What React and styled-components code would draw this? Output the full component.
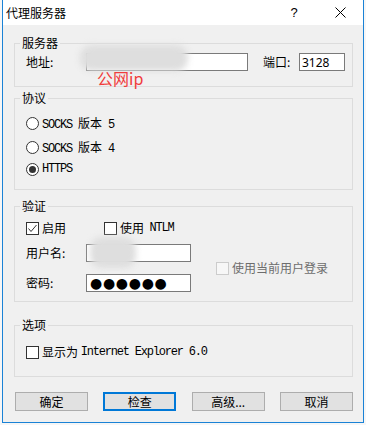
import React from "react";
import styled, { createGlobalStyle } from "styled-components";

const GlobalStyle = createGlobalStyle`
  html, body {
    margin: 0;
    padding: 0;
    background: #f6f6f6;
  }
  body {
    font-family: "Noto Sans CJK SC", "Noto Sans", sans-serif;
    font-size: 12px;
    color: #000;
  }
`;

const Dialog = styled.div`
  position: relative;
  box-sizing: border-box;
  width: 362px;
  height: 423px;
  margin-left: 2px;
  background: #f0f0f0;
  border: 1px solid #1a82d6;
  border-top: none;
  display: flex;
  flex-direction: column;
  overflow: hidden;
`;

const TitleBar = styled.div`
  height: 25px;
  flex: none;
  background: #fff;
  display: flex;
  align-items: center;
  padding-left: 3px;
  font-size: 12px;
`;

const Title = styled.span`
  line-height: 14px;
`;

const CaptionButton = styled.div`
  width: 46px;
  height: 25px;
  display: flex;
  align-items: center;
  justify-content: center;
  font-family: "Liberation Sans", sans-serif;
  font-size: 13px;
  margin-left: ${(p) => (p.$first ? "auto" : "0")};
`;

const Content = styled.div`
  display: flex;
  flex-direction: column;
  padding: 0 10px 0 11px;
`;

const Group = styled.div`
  box-sizing: border-box;
  border: 1px solid #dcdcdc;
  margin-top: ${(p) => p.$mt}px;
  height: ${(p) => p.$h}px;
  padding: 0 11px;
`;

const Legend = styled.div`
  width: fit-content;
  height: 14px;
  margin: -8px 0 0 -6px;
  padding: 0 2px;
  background: #f0f0f0;
  line-height: 14px;
  font-size: 12px;
`;

const Row = styled.div`
  display: flex;
  align-items: center;
  margin-top: ${(p) => p.$mt || 0}px;
  height: ${(p) => p.$h || 14}px;
`;

const FieldLabel = styled.span`
  width: ${(p) => p.$w || 60}px;
  flex: none;
  line-height: 14px;
  margin-left: ${(p) => p.$ml || 0}px;
`;

const TextBox = styled.div`
  box-sizing: border-box;
  width: ${(p) => p.$w}px;
  height: 18px;
  flex: none;
  background: #fff;
  border: 1px solid #7a7a7a;
  display: flex;
  align-items: center;
  padding: 0 2px;
  font-family: "Noto Sans", sans-serif;
  font-size: 12px;
`;

const Dots = styled.span`
  font-family: "DejaVu Sans", sans-serif;
  font-size: 14px;
  line-height: 14px;
  letter-spacing: 0.7px;
  margin-left: 1px;
`;

const Mono = styled.span`
  font-family: "Liberation Mono", "Noto Sans CJK SC", monospace;
  font-size: 12px;
  letter-spacing: -1.2px;
  line-height: 14px;
  height: 14px;
  white-space: nowrap;
`;

const Han = styled.span`
  font-family: "Noto Sans CJK SC", sans-serif;
  letter-spacing: 0;
`;

const Choice = styled.label`
  display: flex;
  align-items: center;
  height: 14px;
  width: ${(p) => (p.$w ? `${p.$w}px` : "auto")};
  margin-left: ${(p) => p.$ml || 0}px;
  color: ${(p) => (p.$disabled ? "#6d6d6d" : "#000")};
  line-height: 14px;
  white-space: nowrap;
`;

const Box = styled.span`
  box-sizing: border-box;
  width: 13px;
  height: 13px;
  flex: none;
  margin-right: 3px;
  background: ${(p) => (p.$disabled ? "#f7f7f7" : "#fff")};
  border: 1px solid ${(p) => (p.$disabled ? "#cccccc" : "#333")};
  display: flex;
  align-items: center;
  justify-content: center;
`;

const Radio = styled.span`
  box-sizing: border-box;
  width: 13px;
  height: 13px;
  flex: none;
  margin-right: 3px;
  border-radius: 50%;
  background: #fff;
  border: 1px solid #333;
  display: flex;
  align-items: center;
  justify-content: center;

  &::after {
    content: "";
    display: ${(p) => (p.$on ? "block" : "none")};
    width: 7px;
    height: 7px;
    border-radius: 50%;
    background: #333;
  }
`;

const Split = styled.div`
  display: flex;
  align-items: center;
  margin-top: 9px;
`;

const Column = styled.div`
  display: flex;
  flex-direction: column;
`;

const Buttons = styled.div`
  display: flex;
  justify-content: space-between;
  margin: 15px 0 0 1px;
`;

const Button = styled.div`
  box-sizing: border-box;
  width: 73px;
  height: 19px;
  display: flex;
  align-items: center;
  justify-content: center;
  background: #e1e1e1;
  border: ${(p) => (p.$focus ? "2px solid #0078d7" : "1px solid #adadad")};
  font-size: 12px;
`;

const Smudge = styled.div`
  position: absolute;
  left: ${(p) => p.$x}px;
  top: ${(p) => p.$y}px;
  width: ${(p) => p.$w}px;
  height: ${(p) => p.$h}px;
  background: #dedede;
  border-radius: 12px;
  filter: blur(3px);
`;

const Note = styled.div`
  position: absolute;
  left: 94px;
  top: 70px;
  color: #f03c3c;
  font-family: "Noto Sans CJK SC", "Noto Sans", sans-serif;
  font-size: 16px;
  line-height: 16px;
`;

const Check = () => (
  <svg width="11" height="11" viewBox="0 0 11 11">
    <polyline points="1.5,5.5 4,8.5 9.5,2" fill="none" stroke="#333" strokeWidth="1" />
  </svg>
);

const CloseIcon = () => (
  <svg width="11" height="11" viewBox="0 0 11 11">
    <path d="M0.5 0.5 L10.5 10.5 M10.5 0.5 L0.5 10.5" stroke="#000" strokeWidth="1" />
  </svg>
);

export default function App() {
  return (
    <>
      <GlobalStyle />
      <Dialog>
        <TitleBar>
          <Title>代理服务器</Title>
          <CaptionButton $first>?</CaptionButton>
          <CaptionButton>
            <CloseIcon />
          </CaptionButton>
        </TitleBar>

        <Content>
          <Group $mt={18} $h={44}>
            <Legend>服务器</Legend>
            <Row $mt={3} $h={18}>
              <FieldLabel>地址:</FieldLabel>
              <TextBox $w={162} />
              <FieldLabel $w={36} $ml={15}>端口:</FieldLabel>
              <TextBox $w={46}>3128</TextBox>
            </Row>
          </Group>

          <Group $mt={11} $h={92}>
            <Legend>协议</Legend>
            <Row $mt={11}>
              <Choice>
                <Radio />
                <Mono>SOCKS <Han>版本</Han> 5</Mono>
              </Choice>
            </Row>
            <Row $mt={10}>
              <Choice>
                <Radio />
                <Mono>SOCKS <Han>版本</Han> 4</Mono>
              </Choice>
            </Row>
            <Row $mt={8}>
              <Choice>
                <Radio $on />
                <Mono>HTTPS</Mono>
              </Choice>
            </Row>
          </Group>

          <Group $mt={16} $h={96}>
            <Legend>验证</Legend>
            <Row $mt={8}>
              <Choice $w={78}>
                <Box>
                  <Check />
                </Box>
                启用
              </Choice>
              <Choice>
                <Box />
                使用&nbsp;&nbsp;<Mono>NTLM</Mono>
              </Choice>
            </Row>
            <Split>
              <Column>
                <Row $h={18}>
                  <FieldLabel>用户名:</FieldLabel>
                  <TextBox $w={105} />
                </Row>
                <Row $mt={12} $h={18}>
                  <FieldLabel>密码:</FieldLabel>
                  <TextBox $w={105}>
                    <Dots>●●●●●●</Dots>
                  </TextBox>
                </Row>
              </Column>
              <Choice $disabled $ml={25}>
                <Box $disabled />
                使用当前用户登录
              </Choice>
            </Split>
          </Group>

          <Group $mt={23} $h={52}>
            <Legend>选项</Legend>
            <Row $mt={13}>
              <Choice>
                <Box />
                <Han>显示为</Han>&nbsp;<Mono>Internet Explorer 6.0</Mono>
              </Choice>
            </Row>
          </Group>

          <Buttons>
            <Button>确定</Button>
            <Button $focus>检查</Button>
            <Button>高级...</Button>
            <Button>取消</Button>
          </Buttons>
        </Content>

        <Smudge $x={77} $y={45} $w={108} $h={26} />
        <Smudge $x={87} $y={237} $w={46} $h={31} />
        <Note>公网ip</Note>
      </Dialog>
    </>
  );
}
